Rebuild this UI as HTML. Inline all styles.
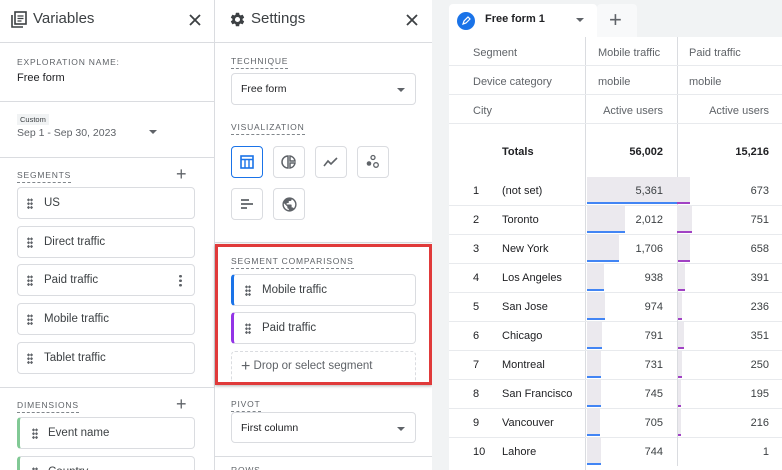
<!DOCTYPE html>
<html><head><meta charset="utf-8"><style>
*{box-sizing:border-box;margin:0;padding:0}
html,body{width:782px;height:470px;overflow:hidden}
body{font-family:"Liberation Sans",Arial,sans-serif;color:#202124;background:#fff;position:relative}
.a{position:absolute}
.hl{position:absolute;height:1px;background:#dadce0}
.lbl{position:absolute;font-size:8.5px;letter-spacing:.8px;color:#5f6368;border-bottom:1px dashed #80868b;padding-bottom:2px}
.chip{position:absolute;border:1px solid #dadce0;border-radius:4px;font-size:11.5px;color:#3c4043;display:flex;align-items:center;padding-left:26px;height:32px}
.grip{position:absolute;left:9px;top:10px;width:6px;height:11px;background:radial-gradient(circle,#5f6368 1.2px,transparent 1.4px) 0 0/3px 3.8px}
.sel{position:absolute;border:1px solid #dadce0;border-radius:4px;font-size:10.5px;padding-left:9px;display:flex;align-items:center}
.car{position:absolute;right:10px;top:14px;width:0;height:0;border-left:4px solid transparent;border-right:4px solid transparent;border-top:4px solid #5f6368}
.car2{position:absolute;width:0;height:0;border-left:4px solid transparent;border-right:4px solid transparent;border-top:4px solid #5f6368}
.ib{position:absolute;width:32px;height:32px;border:1px solid #dadce0;border-radius:4px;display:flex;align-items:center;justify-content:center}
.t{position:absolute;font-size:11px;color:#3c4043}
.r{text-align:right}
</style></head><body>
<div class="a" style="left:214px;top:0;width:1px;height:470px;background:#dadce0"></div>
<svg class="a" style="left:11px;top:11px" width="16" height="18" viewBox="0 0 16 18"><path d="M1 4v12h11" fill="none" stroke="#3c4043" stroke-width="1.6"/><rect x="4" y="1" width="11" height="12" fill="none" stroke="#3c4043" stroke-width="1.6"/><path d="M6.5 5h6M6.5 7.5h6M6.5 10h4" stroke="#3c4043" stroke-width="1.2"/></svg>
<div class="a" style="left:33px;top:10px;font-size:15px;color:#3c4043">Variables</div>
<svg class="a" style="left:189px;top:14px" width="12" height="12"><path d="M1 1l10 10M11 1L1 11" stroke="#3c4043" stroke-width="1.8"/></svg>
<div class="hl" style="left:0;top:42px;width:214px"></div>
<div class="a" style="left:17px;top:57px;font-size:8.5px;letter-spacing:.8px;color:#5f6368">EXPLORATION NAME:</div>
<div class="a" style="left:17px;top:72px;font-size:11px">Free form</div>
<div class="hl" style="left:0;top:101px;width:214px"></div>
<div class="a" style="left:17px;top:114px;font-size:7.5px;background:#f1f3f4;padding:1px 3px;color:#3c4043">Custom</div>
<div class="a" style="left:17px;top:127px;font-size:10.5px;color:#5f6368">Sep 1 - Sep 30, 2023</div>
<div class="car2" style="left:149px;top:130px"></div>
<div class="hl" style="left:0;top:157px;width:214px"></div>
<div class="lbl" style="left:17px;top:170px">SEGMENTS</div>
<div class="a" style="left:176px;top:164px;font-size:18px;color:#5f6368;font-weight:300">+</div>
<div class="chip" style="left:17px;top:187px;width:178px"><span class="grip"></span>US</div>
<div class="chip" style="left:17px;top:226px;width:178px"><span class="grip"></span>Direct traffic</div>
<div class="chip" style="left:17px;top:264px;width:178px"><span class="grip"></span>Paid traffic<span class="a" style="right:12px;top:9px;width:3px;height:13px;background:radial-gradient(circle,#5f6368 1.3px,transparent 1.5px) 0 0/3px 4.5px"></span></div>
<div class="chip" style="left:17px;top:303px;width:178px"><span class="grip"></span>Mobile traffic</div>
<div class="chip" style="left:17px;top:342px;width:178px"><span class="grip"></span>Tablet traffic</div>
<div class="hl" style="left:0;top:387px;width:214px"></div>
<div class="lbl" style="left:17px;top:400px">DIMENSIONS</div>
<div class="a" style="left:176px;top:394px;font-size:18px;color:#5f6368;font-weight:300">+</div>
<div class="chip" style="left:17px;top:417px;width:178px;border-left:3px solid #81c995;padding-left:28px"><span class="grip" style="left:12px"></span>Event name</div>
<div class="chip" style="left:17px;top:456px;width:178px;border-left:3px solid #81c995;padding-left:28px"><span class="grip" style="left:12px"></span>Country</div>

<svg class="a" style="left:229px;top:11px" width="17" height="17" viewBox="0 0 24 24"><path fill="#3c4043" d="M19.14 12.94c.04-.3.06-.61.06-.94 0-.32-.02-.64-.07-.94l2.03-1.58a.49.49 0 00.12-.61l-1.920-3.32a.49.49 0 00-.59-.22l-2.39.96c-.5-.38-1.03-.7-1.62-.94l-.36-2.54a.48.48 0 00-.48-.41h-3.84a.48.48 0 00-.47.41l-.36 2.54c-.59.24-1.13.57-1.62.94l-2.39-.96a.48.48 0 00-.59.22L2.74 8.87a.47.47 0 00.12.61l2.03 1.58c-.05.3-.09.63-.09.94s.02.64.07.94l-2.03 1.58a.49.49 0 00-.12.61l1.92 3.32c.12.22.37.29.59.22l2.39-.96c.5.38 1.03.7 1.62.94l.36 2.54c.05.24.24.41.48.41h3.84c.24 0 .44-.17.47-.41l.36-2.54c.59-.24 1.13-.56 1.62-.94l2.39.96c.22.08.47 0 .59-.22l1.92-3.32a.47.47 0 00-.12-.61l-2.010-1.58zM12 15.6A3.6 3.6 0 1112 8.4a3.6 3.6 0 010 7.2z"/></svg>
<div class="a" style="left:251px;top:10px;font-size:15px;color:#3c4043">Settings</div>
<svg class="a" style="left:406px;top:14px" width="12" height="12"><path d="M1 1l10 10M11 1L1 11" stroke="#3c4043" stroke-width="1.8"/></svg>
<div class="hl" style="left:215px;top:42px;width:217px"></div>
<div class="lbl" style="left:231px;top:56px">TECHNIQUE</div>
<div class="sel" style="left:231px;top:73px;width:185px;height:32px">Free form<span class="car"></span></div>
<div class="lbl" style="left:231px;top:122px">VISUALIZATION</div>
<div class="ib" style="left:231px;top:146px;border-color:#1a73e8"><svg width="14" height="14"><rect x="1" y="1" width="12" height="12" fill="none" stroke="#1a73e8" stroke-width="1.6"/><path d="M1 4.5h12M5 4.5v8.5M9 4.5v8.5" stroke="#1a73e8" stroke-width="1.4"/></svg></div>
<div class="ib" style="left:273px;top:146px"><svg width="16" height="16" viewBox="0 0 16 16"><path d="M7 2a6 6 0 000 12zM9 2v5h5A6 6 0 009 2zM9 9v5a6 6 0 005-5z" fill="none" stroke="#5f6368" stroke-width="1.5"/></svg></div>
<div class="ib" style="left:315px;top:146px"><svg width="16" height="12"><path d="M1 10l4-5 3 3 6-6" fill="none" stroke="#5f6368" stroke-width="1.6"/></svg></div>
<div class="ib" style="left:357px;top:146px"><svg width="16" height="16"><circle cx="8" cy="3.5" r="2" fill="none" stroke="#5f6368" stroke-width="1.3"/><circle cx="4" cy="9.5" r="2.3" fill="#5f6368"/><circle cx="11" cy="11" r="2.3" fill="none" stroke="#5f6368" stroke-width="1.3"/></svg></div>
<div class="ib" style="left:231px;top:188px"><svg width="14" height="12"><path d="M1 2h8M1 6h12M1 10h6" stroke="#5f6368" stroke-width="1.8"/></svg></div>
<div class="ib" style="left:273px;top:188px"><svg width="17" height="17" viewBox="0 0 24 24"><path fill="#5f6368" d="M12 2a10 10 0 100 20 10 10 0 000-20zm-1 17.93A8 8 0 014 12c0-.62.08-1.21.21-1.79L9 15v1a2 2 0 002 2v1.93zm6.9-2.54A2 2 0 0016 16h-1v-3a1 1 0 00-1-1H8v-2h2a1 1 0 001-1V7h2a2 2 0 002-2v-.41a7.980 7.980 0 012.9 12.8z"/></svg></div>
<div class="hl" style="left:215px;top:242px;width:217px"></div>
<div class="a" style="left:215px;top:244px;width:217px;height:141px;border:3px solid #e03a3a;box-shadow:0 1px 3px rgba(0,0,0,.3)"></div>
<div class="lbl" style="left:231px;top:256px">SEGMENT COMPARISONS</div>
<div class="chip" style="left:231px;top:274px;width:185px;border-left:3px solid #1a73e8;padding-left:28px"><span class="grip" style="left:11px"></span>Mobile traffic</div>
<div class="chip" style="left:231px;top:312px;width:185px;border-left:3px solid #9334e6;padding-left:28px"><span class="grip" style="left:11px"></span>Paid traffic</div>
<div class="a" style="left:231px;top:351px;width:185px;height:30px;border:1px dashed #dadce0;border-bottom:none;border-radius:4px 4px 0 0;font-size:11.5px;color:#5f6368;padding:8px 0 0 9px"><span style="font-size:16px;line-height:10px;vertical-align:-2px">+</span> Drop or select segment</div>
<div class="lbl" style="left:231px;top:399px">PIVOT</div>
<div class="sel" style="left:231px;top:412px;width:185px;height:31px">First column<span class="car"></span></div>
<div class="hl" style="left:215px;top:456px;width:217px"></div>
<div class="a" style="left:231px;top:465px;font-size:8.5px;letter-spacing:.8px;color:#5f6368">ROWS</div>

<div class="a" style="left:432px;top:0;width:350px;height:470px;background:#f1f3f4"></div>
<div class="a" style="left:449px;top:4px;width:148px;height:34px;background:#fff;border-radius:4px 4px 0 0"></div>
<div class="a" style="left:597px;top:4px;width:40px;height:33px;background:#f8f9fa;border-radius:4px 4px 0 0"></div>
<div class="a" style="left:457px;top:12px;width:18px;height:18px;border-radius:50%;background:#1a73e8"></div>
<svg class="a" style="left:461px;top:16px" width="10" height="10"><path d="M2 8l1-3 4-4 2 2-4 4z" fill="none" stroke="#fff" stroke-width="1.2"/></svg>
<div class="a" style="left:485px;top:13px;font-size:11px;font-weight:bold;color:#202124">Free form 1</div>
<div class="car2" style="left:576px;top:18px"></div>
<div class="a" style="left:609px;top:7px;font-size:22px;color:#5f6368;font-weight:300">+</div>
<div class="a" style="left:449px;top:37px;width:333px;height:433px;background:#fff"></div>
<div class="a" style="left:585px;top:37px;width:1px;height:433px;background:#dadce0"></div>
<div class="a" style="left:677px;top:37px;width:1px;height:196px;background:#dadce0"></div>
<div class="hl" style="left:449px;top:65px;width:333px;background:#e8eaed"></div>
<div class="hl" style="left:449px;top:94px;width:333px;background:#e8eaed"></div>
<div class="hl" style="left:449px;top:123px;width:333px;background:#e8eaed"></div>
<div class="t" style="left:473px;top:47px;color:#5f6368">Segment</div>
<div class="t" style="left:598px;top:47px;color:#5f6368">Mobile traffic</div>
<div class="t" style="left:689px;top:47px;color:#5f6368">Paid traffic</div>
<div class="t" style="left:473px;top:76px;color:#5f6368">Device category</div>
<div class="t" style="left:598px;top:76px;color:#5f6368">mobile</div>
<div class="t" style="left:689px;top:76px;color:#5f6368">mobile</div>
<div class="t" style="left:473px;top:105px;color:#5f6368">City</div>
<div class="t r" style="left:586px;width:77px;top:105px;color:#5f6368">Active users</div>
<div class="t r" style="left:678px;width:91px;top:105px;color:#5f6368">Active users</div>
<div class="t" style="left:502px;top:146px;font-weight:bold;color:#202124">Totals</div>
<div class="t r" style="left:586px;width:77px;top:146px;font-weight:bold;color:#202124">56,002</div>
<div class="t r" style="left:678px;width:91px;top:146px;font-weight:bold;color:#202124">15,216</div>
<div id="rows"></div>
<script>
var d=[["(not set)",5361,673],["Toronto",2012,751],["New York",1706,658],["Los Angeles",938,391],["San Jose",974,236],["Chicago",791,351],["Montreal",731,250],["San Francisco",745,195],["Vancouver",705,216],["Lahore",744,1]];
var h="";
d.forEach(function(r,i){var y=177+i*29;
var w1=Math.max(10,Math.round(r[1]/5361*100)),w2=Math.max(1,Math.round(r[2]/751*15));
h+='<div class="a" style="left:587px;top:'+y+'px;width:'+w1+'px;height:27px;background:#ebe9ee"></div>';
h+='<div class="a" style="left:587px;top:'+(y+25)+'px;width:'+Math.min(w1,90)+'px;height:2px;background:#4285f4"></div>';
h+='<div class="a" style="left:677px;top:'+y+'px;width:'+w2+'px;height:27px;background:#ebe9ee"></div>';
h+='<div class="a" style="left:677px;top:'+(y+25)+'px;width:'+w2+'px;height:2px;background:#a142c4"></div>';
if(i<9)h+='<div class="hl" style="left:449px;top:'+(y+28)+'px;width:333px;background:#e8eaed"></div>';
h+='<div class="t" style="left:473px;top:'+(y+8)+'px;color:#202124">'+(i+1)+'</div>';
h+='<div class="t" style="left:502px;top:'+(y+8)+'px;color:#202124">'+r[0]+'</div>';
h+='<div class="t r" style="left:586px;width:77px;top:'+(y+8)+'px">'+r[1].toLocaleString("en-US")+'</div>';
h+='<div class="t r" style="left:678px;width:91px;top:'+(y+8)+'px">'+r[2].toLocaleString("en-US")+'</div>';});
document.getElementById("rows").innerHTML=h;
</script>
<div class="a" style="left:677px;top:233px;width:1px;height:233px;background:#dadce0"></div>
</body></html>
